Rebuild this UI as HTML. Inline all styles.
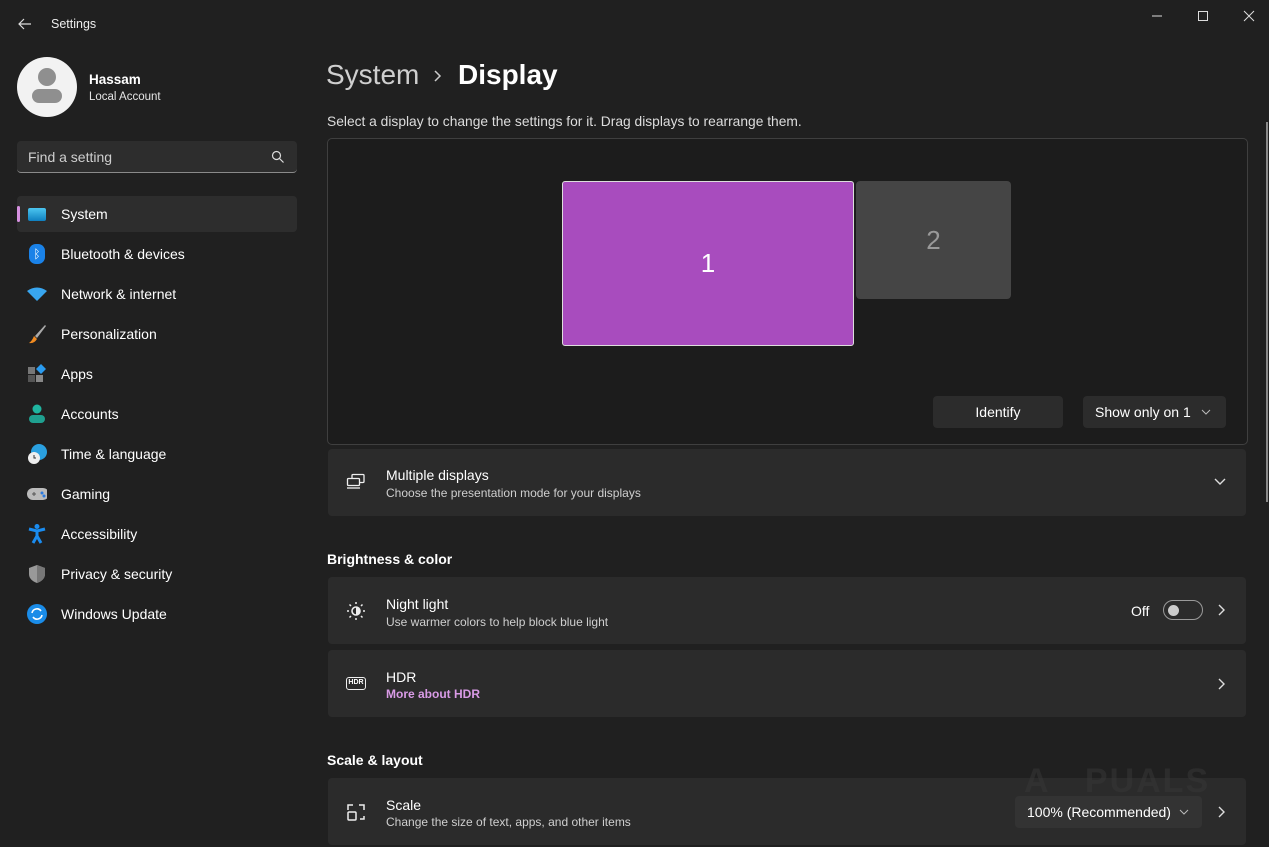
<!DOCTYPE html>
<html><head><meta charset="utf-8"><style>
*{box-sizing:border-box;margin:0;padding:0}
body{width:1269px;height:847px;overflow:hidden;background:#202020;font-family:"Liberation Sans",sans-serif;color:#fff;position:relative}
.abs{position:absolute}
.nav{position:absolute;left:17px;width:280px;height:36px;display:flex;align-items:center;font-size:14px}
.nav .ic{width:20px;height:20px;margin-left:10px;margin-right:14px;display:flex;align-items:center;justify-content:center}
.card{position:absolute;left:328px;width:918px;background:#2b2b2b;border-radius:4px}
.t1{position:absolute;left:58px;font-size:14px;color:#fff}
.t2{position:absolute;left:58px;font-size:12px;color:#cfcfcf}
.chev{position:absolute;right:20px}
h3{position:absolute;left:327px;font-size:14px;font-weight:bold}
</style></head><body>
<svg class="abs" style="left:17px;top:17px" width="16" height="14" viewBox="0 0 16 14"><path d="M14 7H2M7 2L2 7l5 5" stroke="#ddd" stroke-width="1.2" fill="none"/></svg>
<div class="abs" style="left:51px;top:17px;font-size:12.5px;color:#eee">Settings</div>
<svg class="abs" style="left:1150px;top:10px" width="110" height="14"><path d="M2 6h10" stroke="#ddd"/><rect x="48.5" y="1.5" width="9" height="9" stroke="#ddd" fill="none"/><path d="M94 1l10 10M104 1L94 11" stroke="#ddd"/></svg>
<div class="abs" style="left:17px;top:57px;width:60px;height:60px;border-radius:50%;background:#f2f2f2"></div>
<div class="abs" style="left:38px;top:68px;width:18px;height:18px;border-radius:50%;background:#8f8f8f"></div>
<div class="abs" style="left:32px;top:89px;width:30px;height:14px;border-radius:8px;background:#8f8f8f"></div>
<div class="abs" style="left:89px;top:72px;font-size:13.5px;font-weight:bold">Hassam</div>
<div class="abs" style="left:89px;top:91px;font-size:11.5px;color:#e5e5e5">Local Account</div>
<div class="abs" style="left:17px;top:141px;width:280px;height:32px;background:#2d2d2d;border-radius:4px;border-bottom:1px solid #8a8a8a"></div>
<div class="abs" style="left:28px;top:149px;font-size:14px;color:#cfcfcf">Find a setting</div>
<svg class="abs" style="left:271px;top:150px" width="14" height="14"><circle cx="5.5" cy="5.5" r="4" stroke="#ddd" fill="none" stroke-width="1.2"/><path d="M8.5 8.5l4 4" stroke="#ddd" stroke-width="1.2"/></svg>
<div class="nav" style="top:196px;background:#2d2d2d;border-radius:4px"><div class="abs" style="left:0;top:10px;width:3px;height:16px;background:#d691e0;border-radius:2px"></div><div class="ic"><div style="width:18px;height:13px;background:linear-gradient(#4cc6f0,#0f80c0);border-radius:2px"></div></div>System</div>
<div class="nav" style="top:236px"><div class="ic"><div style="width:16px;height:20px;background:#1a82e8;border-radius:7px;color:#fff;font-size:12px;text-align:center;line-height:20px">ᛒ</div></div>Bluetooth &amp; devices</div>
<div class="nav" style="top:276px"><div class="ic"><svg width="20" height="14"><path d="M0 4Q10-3 20 4L10 14z" fill="#38a6f0"/></svg></div>Network &amp; internet</div>
<div class="nav" style="top:316px"><div class="ic"><svg width="20" height="20"><path d="M18 1L8 12l2 2L19 2z" fill="#aaa"/><path d="M7 12l3 3q-3 5-8 4q3-2 5-7z" fill="#f08a20"/></svg></div>Personalization</div>
<div class="nav" style="top:356px"><div class="ic"><svg width="20" height="20"><rect x="1" y="3" width="7" height="7" fill="#777"/><rect x="1" y="11" width="7" height="7" fill="#555"/><rect x="9" y="11" width="7" height="7" fill="#888"/><path d="M14 0l5 5-5 5-5-5z" fill="#2a9bf0"/></svg></div>Apps</div>
<div class="nav" style="top:396px"><div class="ic"><svg width="20" height="20"><circle cx="10" cy="5" r="4.5" fill="#1fb5a0"/><rect x="2" y="11" width="16" height="8" rx="4" fill="#1fa090"/></svg></div>Accounts</div>
<div class="nav" style="top:436px"><div class="ic"><svg width="22" height="22"><circle cx="12" cy="9" r="8" fill="#2aa0e0"/><circle cx="7" cy="15" r="6" fill="#eee"/><path d="M7 12v3h2" stroke="#333" fill="none"/></svg></div>Time &amp; language</div>
<div class="nav" style="top:476px"><div class="ic"><svg width="22" height="14"><rect x="0" y="1" width="22" height="12" rx="6" fill="#bbb"/><path d="M5 7h4M7 5v4" stroke="#555"/><circle cx="15" cy="6" r="1.5" fill="#2a7ae0"/><circle cx="17" cy="9" r="1.5" fill="#2a7ae0"/></svg></div>Gaming</div>
<div class="nav" style="top:516px"><div class="ic"><svg width="18" height="20"><circle cx="9" cy="2.5" r="2.5" fill="#1a8cf0"/><path d="M1 5l8 2 8-2M9 7v5l-4 7M9 12l4 7" stroke="#1a8cf0" stroke-width="3" fill="none"/></svg></div>Accessibility</div>
<div class="nav" style="top:556px"><div class="ic"><svg width="18" height="20"><path d="M9 1l8 3v6q0 6-8 9-8-3-8-9V4z" fill="#999"/><path d="M9 1l8 3v6q0 6-8 9z" fill="#777"/></svg></div>Privacy &amp; security</div>
<div class="nav" style="top:596px"><div class="ic"><svg width="20" height="20"><circle cx="10" cy="10" r="10" fill="#1a8ce8"/><path d="M5 9a5 5 0 0 1 9-2M15 11a5 5 0 0 1-9 2" stroke="#fff" stroke-width="1.6" fill="none"/></svg></div>Windows Update</div>
<div class="abs" style="left:326px;top:59px;font-size:28px;color:#cfcfcf;font-weight:500">System</div>
<svg class="abs" style="left:432px;top:69px" width="10" height="14"><path d="M3 2l5 5-5 5" stroke="#ccc" stroke-width="1.5" fill="none"/></svg>
<div class="abs" style="left:458px;top:59px;font-size:28px;font-weight:bold">Display</div>
<div class="abs" style="left:327px;top:114px;font-size:13.8px;color:#ddd">Select a display to change the settings for it. Drag displays to rearrange them.</div>
<div class="abs" style="left:327px;top:138px;width:921px;height:307px;background:#1c1c1c;border:1px solid #3f3f3f;border-radius:5px"></div>
<div class="abs" style="left:562px;top:181px;width:292px;height:165px;background:#a84cbe;border:1px solid #ddd;border-radius:3px;font-size:26px;display:flex;align-items:center;justify-content:center">1</div>
<div class="abs" style="left:856px;top:181px;width:155px;height:118px;background:#454545;border-radius:4px;font-size:26px;color:#999;display:flex;align-items:center;justify-content:center">2</div>
<div class="abs" style="left:933px;top:396px;width:130px;height:32px;background:#2c2c2c;border-radius:4px;font-size:14px;display:flex;align-items:center;justify-content:center">Identify</div>
<div class="abs" style="left:1083px;top:396px;width:143px;height:32px;background:#2c2c2c;border-radius:4px;font-size:14px;padding-left:12px;line-height:32px">Show only on 1<svg class="abs" style="left:118px;top:13px" width="10" height="6"><path d="M1 1l4 4 4-4" stroke="#bbb" fill="none"/></svg></div>
<div class="card" style="top:449px;height:67px">
<svg class="abs" style="left:18px;top:24px" width="20" height="18"><rect x="6" y="1.5" width="12" height="8" rx="1" stroke="#eee" fill="none" stroke-width="1.3"/><rect x="1.5" y="5.5" width="12" height="7" rx="1" fill="#2b2b2b" stroke="#eee" stroke-width="1.3"/><path d="M1 15h13" stroke="#eee" stroke-width="1.3"/></svg>
<div class="t1" style="top:18px">Multiple displays</div><div class="t2" style="top:37px">Choose the presentation mode for your displays</div>
<svg class="chev" style="top:29px" width="12" height="8"><path d="M1 1l5 5 5-5" stroke="#ddd" stroke-width="1.4" fill="none"/></svg></div>
<h3 style="top:551px">Brightness &amp; color</h3>
<div class="card" style="top:577px;height:67px">
<svg class="abs" style="left:18px;top:24px" width="20" height="20"><circle cx="10" cy="10" r="4" stroke="#eee" stroke-width="1.6" fill="none"/><path d="M10 6a4 4 0 0 1 0 8z" fill="#eee"/><path d="M10 1v2M10 17v2M1 10h2M17 10h2M3.5 3.5l1.5 1.5M15 15l1.5 1.5M3.5 16.5L5 15M15 5l1.5-1.5" stroke="#eee" stroke-width="1.5"/></svg>
<div class="t1" style="top:19px">Night light</div><div class="t2" style="top:38px">Use warmer colors to help block blue light</div>
<div class="abs" style="left:803px;top:26px;font-size:14px">Off</div>
<div class="abs" style="left:835px;top:23px;width:40px;height:20px;border:1px solid #9a9a9a;border-radius:10px"><div style="position:absolute;left:4px;top:4px;width:11px;height:11px;border-radius:50%;background:#ccc"></div></div>
<svg class="chev" style="top:27px" width="8" height="12"><path d="M1 1l5 5-5 5" stroke="#ddd" stroke-width="1.4" fill="none"/></svg></div>
<div class="card" style="top:650px;height:67px">
<div class="abs" style="left:18px;top:27px;width:20px;height:13px;border:1.5px solid #eee;border-radius:3px;font-size:7px;font-weight:bold;text-align:center;line-height:10px">HDR</div>
<div class="t1" style="top:19px">HDR</div><div class="t2" style="top:37px;color:#d99be6;font-weight:bold">More about HDR</div>
<svg class="chev" style="top:28px" width="8" height="12"><path d="M1 1l5 5-5 5" stroke="#ddd" stroke-width="1.4" fill="none"/></svg></div>
<h3 style="top:752px">Scale &amp; layout</h3>
<div class="card" style="top:778px;height:67px">
<svg class="abs" style="left:18px;top:24px" width="20" height="20"><path d="M2 8V3h5M13 3h5v5M18 14v3h-4" stroke="#eee" stroke-width="1.5" fill="none"/><rect x="2" y="10" width="8" height="8" rx="1" stroke="#eee" stroke-width="1.5" fill="none"/></svg>
<div class="t1" style="top:19px">Scale</div><div class="t2" style="top:37px">Change the size of text, apps, and other items</div>
<div class="abs" style="left:687px;top:18px;width:187px;height:32px;background:#333;border-radius:4px;font-size:14px;padding-left:12px;line-height:32px">100% (Recommended)<svg class="abs" style="left:164px;top:13px" width="10" height="6"><path d="M1 1l4 4 4-4" stroke="#bbb" fill="none"/></svg></div>
<svg class="chev" style="top:28px" width="8" height="12"><path d="M1 1l5 5-5 5" stroke="#ddd" stroke-width="1.4" fill="none"/></svg></div>
<div class="abs" style="left:1024px;top:762px;font-size:34px;font-weight:bold;color:rgba(55,55,55,.55);letter-spacing:2px">A&nbsp;&nbsp;&nbsp;PUALS</div>
<div class="abs" style="left:1266px;top:122px;width:2px;height:380px;background:#8a8a8a"></div>
</body></html>
